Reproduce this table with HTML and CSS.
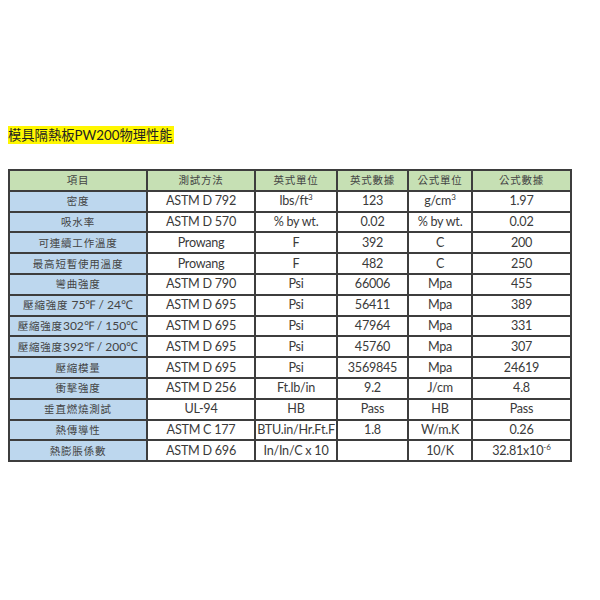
FILE: index.html
```html
<!DOCTYPE html>
<html lang="zh-Hant">
<head>
<meta charset="utf-8">
<title>模具隔熱板PW200物理性能</title>
<link rel="stylesheet" href="styles.css">
</head>
<body>
<div class="page">
  <h1 class="title"><span class="mark">模具隔熱板PW200物理性能</span></h1>
  <table class="spec">
    <colgroup>
      <col class="c1"><col class="c2"><col class="c3"><col class="c4"><col class="c5"><col class="c6">
    </colgroup>
    <thead>
      <tr><th class="cjk">項目</th><th class="cjk">測試方法</th><th class="cjk">英式單位</th><th class="cjk">英式數據</th><th class="cjk">公式單位</th><th class="cjk">公式數據</th></tr>
    </thead>
    <tbody>
      <tr><td class="item">密度</td><td>ASTM D 792</td><td>lbs/ft<sup>3</sup></td><td>123</td><td>g/cm<sup>3</sup></td><td>1.97</td></tr>
      <tr><td class="item">吸水率</td><td>ASTM D 570</td><td>% by wt.</td><td>0.02</td><td>% by wt.</td><td>0.02</td></tr>
      <tr><td class="item">可連續工作溫度</td><td>Prowang</td><td>F</td><td>392</td><td>C</td><td>200</td></tr>
      <tr><td class="item">最高短暫使用溫度</td><td>Prowang</td><td>F</td><td>482</td><td>C</td><td>250</td></tr>
      <tr><td class="item">彎曲強度</td><td>ASTM D 790</td><td>Psi</td><td>66006</td><td>Mpa</td><td>455</td></tr>
      <tr><td class="item">壓縮強度 <span class="lat">75℉ / 24℃</span></td><td>ASTM D 695</td><td>Psi</td><td>56411</td><td>Mpa</td><td>389</td></tr>
      <tr><td class="item">壓縮強度<span class="lat">302℉ / 150℃</span></td><td>ASTM D 695</td><td>Psi</td><td>47964</td><td>Mpa</td><td>331</td></tr>
      <tr><td class="item">壓縮強度<span class="lat">392℉ / 200℃</span></td><td>ASTM D 695</td><td>Psi</td><td>45760</td><td>Mpa</td><td>307</td></tr>
      <tr><td class="item">壓縮模量</td><td>ASTM D 695</td><td>Psi</td><td>3569845</td><td>Mpa</td><td>24619</td></tr>
      <tr><td class="item">衝擊強度</td><td>ASTM D 256</td><td>Ft.lb/in</td><td>9.2</td><td>J/cm</td><td>4.8</td></tr>
      <tr><td class="item">垂直燃燒測試</td><td>UL-94</td><td>HB</td><td>Pass</td><td>HB</td><td>Pass</td></tr>
      <tr><td class="item">熱傳導性</td><td>ASTM C 177</td><td>BTU.in/Hr.Ft.F</td><td>1.8</td><td>W/m.K</td><td>0.26</td></tr>
      <tr><td class="item">熱膨脹係數</td><td>ASTM D 696</td><td>In/In/C x 10</td><td></td><td>10/K</td><td>32.81x10<sup>-6</sup></td></tr>
    </tbody>
  </table>
</div>
</body>
</html>
```
FILE: styles.css
```css
html, body {
  margin: 0;
  padding: 0;
  background: #ffffff;
}
.page {
  padding: 126px 0 0 8px;
  font-family: Lato, "Noto Sans CJK TC", sans-serif;
  color: #3a3a3a;
}
.title {
  margin: 0 0 25px 0;
  font-family: Lato, "Noto Sans CJK TC", sans-serif;
  font-weight: 400;
  font-size: 13.3px;
  line-height: 18px;
  color: #222222;
}
.mark {
  background: #fff700;
  display: inline-block;
  padding: 0 1px 0 0;
}
.spec {
  border-collapse: collapse;
  width: 563px;
  table-layout: fixed;
  font-size: 12.6px;
  letter-spacing: -0.25px;
}
.c1 { width: 138px; }
.c2 { width: 108px; }
.c3 { width: 82px; }
.c4 { width: 71px; }
.c5 { width: 64px; }
.c6 { width: 99px; }
.spec th, .spec td {
  border: 2px solid #3d3d3d;
  height: 18.8px;
  padding: 0;
  text-align: center;
  vertical-align: middle;
  white-space: nowrap;
  line-height: 16px;
  font-weight: 400;
}
.spec th {
  background: #c6e0b4;
}
.cjk, .item {
  font-family: "Noto Sans CJK TC", sans-serif;
  font-size: 10.5px;
  letter-spacing: 0.8px;
  color: #444444;
}
.spec td.item {
  background: #bdd7ee;
}
.lat {
  font-family: Lato, sans-serif;
  font-size: 12px;
  letter-spacing: 0;
}
sup {
  font-size: 8px;
  line-height: 0;
  vertical-align: 5px;
  letter-spacing: 0;
}
```
